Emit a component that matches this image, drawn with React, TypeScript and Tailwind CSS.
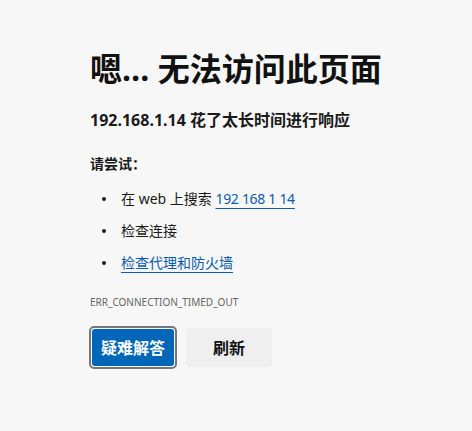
import React from "react";

export default function App() {
  const font = { fontFamily: '"Segoe UI", "Noto Sans", "Noto Sans CJK SC", sans-serif' };
  return (
    <div className="w-[472px] h-[431px] bg-[#f7f7f7] text-[#1a1a1a] overflow-hidden" style={font}>
      <div className="pl-[90px] pt-[49px] flex flex-col items-start">
        <h1 className="text-[32px] leading-[40px] font-bold text-[#111]">嗯… 无法访问此页面</h1>
        <p className="mt-[20px] text-[16px] leading-[22px] font-bold">192.168.1.14 花了太长时间进行响应</p>
        <p className="mt-[23px] text-[14px] leading-[20px] font-bold">请尝试：</p>
        <ul className="mt-[15px] flex flex-col gap-[12px] text-[14px] leading-[20px]">
          <li className="flex items-center">
            <span className="w-[4px] h-[4px] rounded-full bg-[#222] ml-[12px] mr-[15px]" />
            <span>在 web 上搜索 <a className="text-[#0b5cad] underline decoration-[#0b5cad] underline-offset-[4px] tracking-[-0.3px]">192 168 1 14</a></span>
          </li>
          <li className="flex items-center">
            <span className="w-[4px] h-[4px] rounded-full bg-[#222] ml-[12px] mr-[15px]" />
            <span>检查连接</span>
          </li>
          <li className="flex items-center">
            <span className="w-[4px] h-[4px] rounded-full bg-[#222] ml-[12px] mr-[15px]" />
            <a className="text-[#0b5cad] underline decoration-[#0b5cad] underline-offset-[4px]">检查代理和防火墙</a>
          </li>
        </ul>
        <p className="mt-[22px] text-[10px] leading-[14px] text-[#666]">ERR_CONNECTION_TIMED_OUT</p>
        <div className="mt-[17px] ml-[-1px] flex items-center gap-[9px]">
          <button className="w-[88px] h-[43px] rounded-[5px] border-2 border-[#767676] p-[1px] bg-[#f7f7f7]">
            <span className="flex w-full h-full items-center justify-center rounded-[3px] bg-[#0067b8] text-white text-[16px] font-bold">疑难解答</span>
          </button>
          <button className="w-[86px] h-[39px] rounded-[4px] bg-[#efefef] text-[#111] text-[16px] font-bold flex items-center justify-center">刷新</button>
        </div>
      </div>
    </div>
  );
}
